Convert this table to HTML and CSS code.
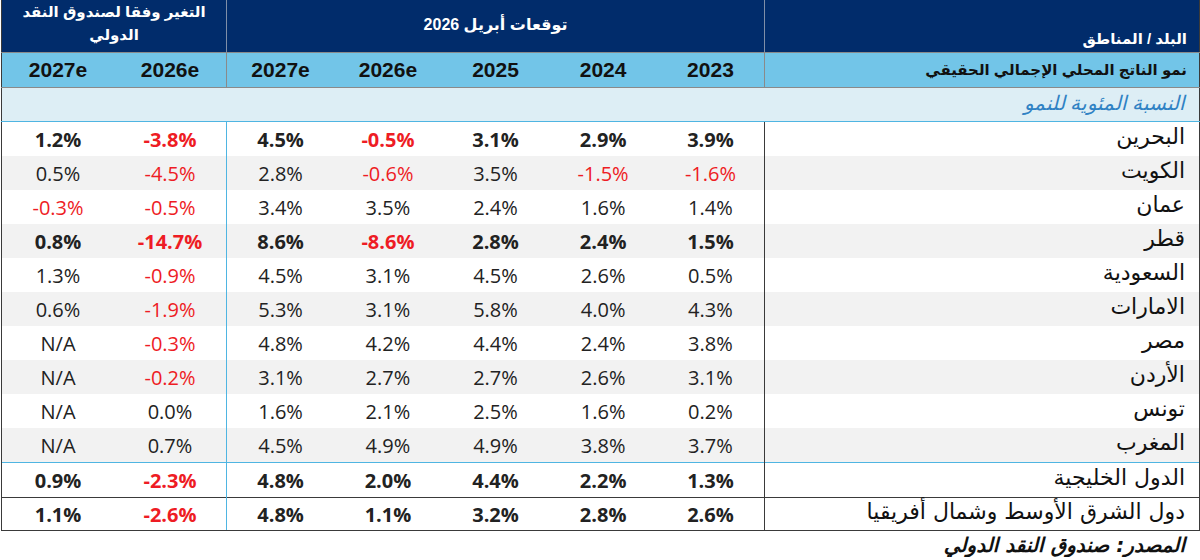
FILE: index.html
```html
<!DOCTYPE html>
<html lang="ar" dir="rtl">
<head>
<meta charset="utf-8">
<title>نمو الناتج المحلي الإجمالي الحقيقي</title>
<link rel="stylesheet" href="styles.css">
</head>
<body>
<div class="page">
<table class="gdp">
  <colgroup>
    <col class="c-country">
    <col class="c-y"><col class="c-y"><col class="c-y"><col class="c-y"><col class="c-y">
    <col class="c-imf"><col class="c-imf">
  </colgroup>
  <thead>
    <tr class="h1">
      <th class="country bottom">البلد / المناطق</th>
      <th colspan="5" class="grp">توقعات أبريل 2026</th>
      <th colspan="2" class="grp imfh">التغير وفقا لصندوق النقد الدولي</th>
    </tr>
    <tr class="h2">
      <th class="country">نمو الناتج المحلي الإجمالي الحقيقي</th>
      <th>2023</th><th>2024</th><th>2025</th><th>2026e</th><th class="sep">2027e</th>
      <th>2026e</th><th>2027e</th>
    </tr>
    <tr class="h3">
      <th colspan="8" class="unit">النسبة المئوية للنمو</th>
    </tr>
  </thead>
  <tbody>
    <tr class="b">
      <td class="country">البحرين</td>
      <td>3.9%</td><td>2.9%</td><td>3.1%</td><td class="neg">-0.5%</td><td class="sep">4.5%</td>
      <td class="neg">-3.8%</td><td>1.2%</td>
    </tr>
    <tr class="alt">
      <td class="country">الكويت</td>
      <td class="neg">-1.6%</td><td class="neg">-1.5%</td><td>3.5%</td><td class="neg">-0.6%</td><td class="sep">2.8%</td>
      <td class="neg">-4.5%</td><td>0.5%</td>
    </tr>
    <tr>
      <td class="country">عمان</td>
      <td>1.4%</td><td>1.6%</td><td>2.4%</td><td>3.5%</td><td class="sep">3.4%</td>
      <td class="neg">-0.5%</td><td class="neg">-0.3%</td>
    </tr>
    <tr class="alt b">
      <td class="country">قطر</td>
      <td>1.5%</td><td>2.4%</td><td>2.8%</td><td class="neg">-8.6%</td><td class="sep">8.6%</td>
      <td class="neg">-14.7%</td><td>0.8%</td>
    </tr>
    <tr>
      <td class="country">السعودية</td>
      <td>0.5%</td><td>2.6%</td><td>4.5%</td><td>3.1%</td><td class="sep">4.5%</td>
      <td class="neg">-0.9%</td><td>1.3%</td>
    </tr>
    <tr class="alt">
      <td class="country">الامارات</td>
      <td>4.3%</td><td>4.0%</td><td>5.8%</td><td>3.1%</td><td class="sep">5.3%</td>
      <td class="neg">-1.9%</td><td>0.6%</td>
    </tr>
    <tr>
      <td class="country">مصر</td>
      <td>3.8%</td><td>2.4%</td><td>4.4%</td><td>4.2%</td><td class="sep">4.8%</td>
      <td class="neg">-0.3%</td><td>N/A</td>
    </tr>
    <tr class="alt">
      <td class="country">الأردن</td>
      <td>3.1%</td><td>2.6%</td><td>2.7%</td><td>2.7%</td><td class="sep">3.1%</td>
      <td class="neg">-0.2%</td><td>N/A</td>
    </tr>
    <tr>
      <td class="country">تونس</td>
      <td>0.2%</td><td>1.6%</td><td>2.5%</td><td>2.1%</td><td class="sep">1.6%</td>
      <td>0.0%</td><td>N/A</td>
    </tr>
    <tr class="alt">
      <td class="country">المغرب</td>
      <td>3.7%</td><td>3.8%</td><td>4.9%</td><td>4.9%</td><td class="sep">4.5%</td>
      <td>0.7%</td><td>N/A</td>
    </tr>
    <tr class="b gcc">
      <td class="country">الدول الخليجية</td>
      <td>1.3%</td><td>2.2%</td><td>4.4%</td><td>2.0%</td><td class="sep">4.8%</td>
      <td class="neg">-2.3%</td><td>0.9%</td>
    </tr>
    <tr class="b mena">
      <td class="country">دول الشرق الأوسط وشمال أفريقيا</td>
      <td>2.6%</td><td>2.8%</td><td>3.2%</td><td>1.1%</td><td class="sep">4.8%</td>
      <td class="neg">-2.6%</td><td>1.1%</td>
    </tr>
  </tbody>
</table>
<p class="source">المصدر: صندوق النقد الدولي</p>
</div>
</body>
</html>
```

FILE: styles.css
```css
html, body {
  margin: 0;
  padding: 0;
  background: #ffffff;
}

.page {
  width: 1200px;
}

.gdp {
  direction: rtl;
  border-collapse: collapse;
  table-layout: fixed;
  width: 1199px;
  font-family: "Open Sans", "Noto Sans", sans-serif;
  color: #1b1b1b;
}

.c-country { width: 435px; }
.c-y { width: 107.6px; }
.c-imf { width: 112.5px; }

/* header row 1 */
.h1 th {
  background: #012c6b;
  color: #ffffff;
  height: 48px;
  padding: 0;
  font-family: "Liberation Sans", "DejaVu Sans", sans-serif;
  font-weight: bold;
  font-size: 15px;
  border-left: 1px solid #7f8fa8;
  border-bottom: 1px solid #8a8a8a;
}
.h1 th.country {
  vertical-align: bottom;
  text-align: right;
  padding: 0 12px 4px 0;
  border-right: 1px solid #3a3a3a;
}
.h1 th.grp {
  text-align: center;
  vertical-align: middle;
  padding-bottom: 3px;
  font-size: 16px;
}
.h1 th.imfh {
  vertical-align: top;
  line-height: 23px;
  font-size: 15px;
  padding: 0 10px;
  border-left: 1px solid #3a3a3a;
}

/* header row 2 */
.h2 th {
  background: #72c5e8;
  height: 34px;
  padding: 0;
  font-family: "Liberation Sans", "DejaVu Sans", sans-serif;
  font-weight: bold;
  font-size: 21px;
  color: #111111;
  text-align: center;
  border-bottom: 1px solid #8a8a8a;
}
.h2 th.country {
  text-align: right;
  font-size: 15px;
  padding-right: 12px;
  border-right: 1px solid #3a3a3a;
  border-left: 1px solid #8a8a8a;
}
.h2 th.sep { border-left: 1px solid #8a8a8a; }
.h2 th:last-child { border-left: 1px solid #3a3a3a; }

/* header row 3 */
.h3 th {
  background: #ddeef5;
  height: 29px;
  padding: 0 14px 4px 0;
  text-align: right;
  font-weight: normal;
  font-style: italic;
  font-size: 20px;
  color: #2f82c4;
  border-right: 1px solid #3a3a3a;
  border-left: 1px solid #3a3a3a;
  border-bottom: 1px solid #4fb5e2;
}

/* body */
tbody td {
  height: 34px;
  padding: 0;
  text-align: center;
  direction: ltr;
  font-size: 20px;
  color: #222222;
  background: #ffffff;
}
tbody tr.alt td { background: #f2f2f2; }
tbody td.country {
  direction: rtl;
  text-align: right;
  padding: 0 14px 5px 0;
  height: 29px;
  font-family: "DejaVu Sans", "Noto Sans", sans-serif;
  font-size: 22px;
  color: #111111;
  font-weight: normal;
  border-right: 1px solid #3a3a3a;
  border-left: 1px solid #3a3a3a;
}
tbody td.sep { border-left: 1px solid #4fb5e2; }
tbody td:last-child { border-left: 1px solid #3a3a3a; }

tbody tr.b td { font-weight: 700; }
tbody tr.b td.country { font-weight: normal; }

tbody td.neg { color: #ee1c24; }

tbody tr.gcc td {
  height: 34px;
  border-top: 1px solid #4fb5e2;
}
tbody tr.gcc td.country { height: 29px; }
tbody tr.mena td {
  height: 32px;
  border-top: 1px solid #3a3a3a;
  border-bottom: 1px solid #3a3a3a;
}
tbody tr.mena td.country { height: 27px; }

.source {
  margin: 2px 0 0 0;
  padding-right: 15px;
  text-align: right;
  font-family: "DejaVu Sans", sans-serif;
  font-weight: bold;
  font-style: italic;
  font-size: 20px;
  line-height: 24px;
  color: #111111;
}
```
